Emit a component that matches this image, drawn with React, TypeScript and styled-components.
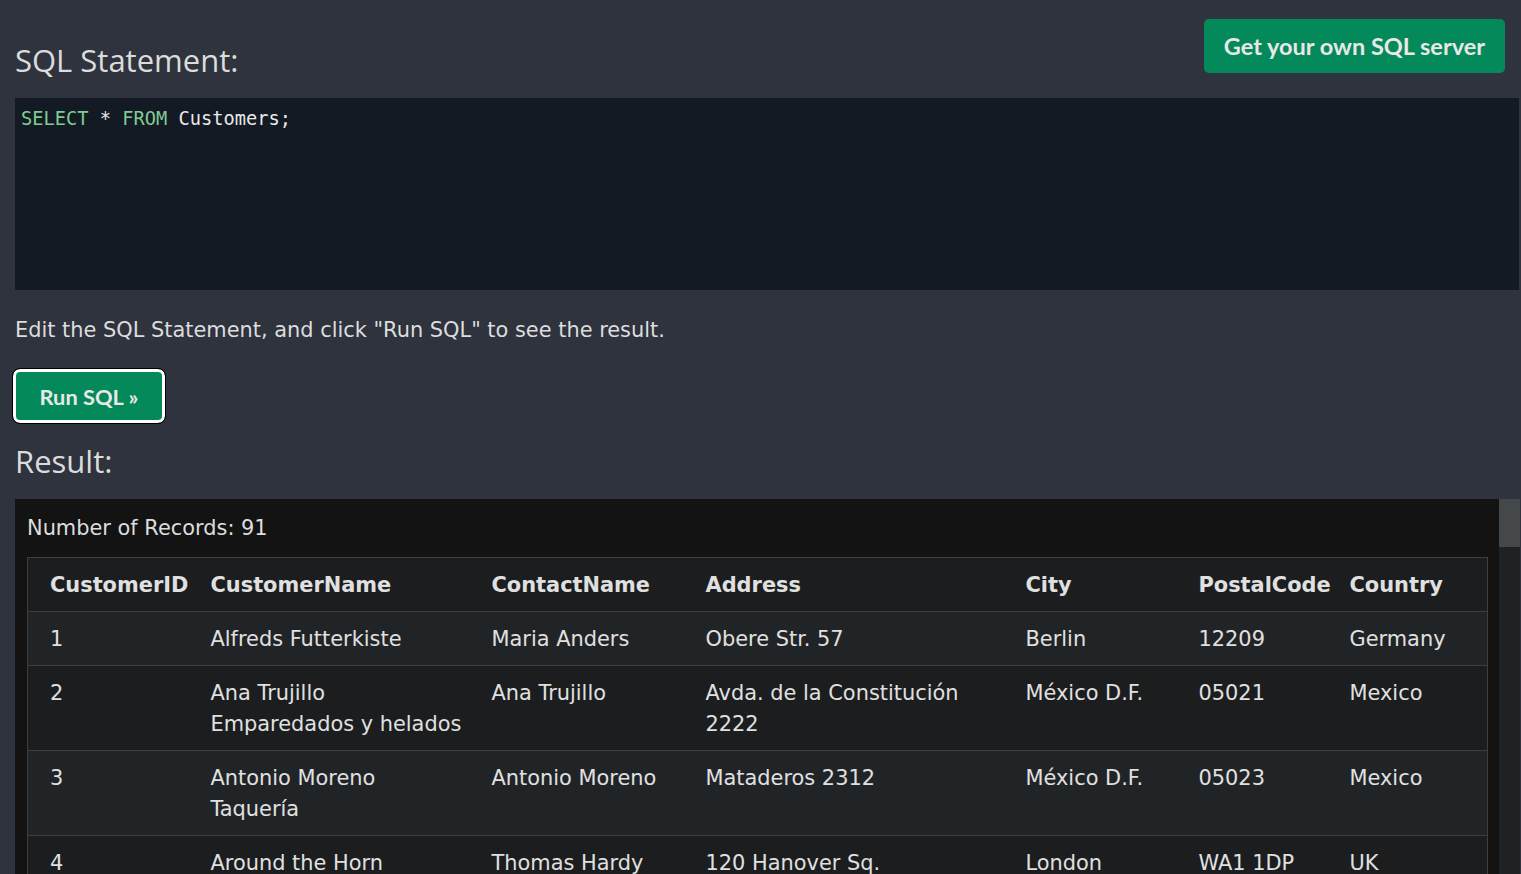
import React from "react";
import styled, { createGlobalStyle } from "styled-components";

const GlobalStyle = createGlobalStyle`
  html, body {
    margin: 0;
    padding: 0;
    background: #2e333d;
    overflow: hidden;
  }
  body {
    font-family: "DejaVu Sans", Verdana, sans-serif;
    color: #dddddd;
  }
`;

const Page = styled.div`
  padding: 0 1px 0 15px;
  height: 874px;
  box-sizing: border-box;
`;

const TopRow = styled.div`
  display: flex;
  justify-content: space-between;
  align-items: flex-start;
  padding-top: 19px;
`;

const Heading = styled.h2`
  margin: 22px 0 0 0;
  font-family: "Open Sans", "Noto Sans", sans-serif;
  font-weight: 400;
  font-size: 31px;
  line-height: 38px;
  color: #dcdcdc;
`;

const ServerButton = styled.button`
  height: 54px;
  margin-right: 15px;
  padding: 0 20px;
  border: none;
  border-radius: 5px;
  background: #04895a;
  color: #e8e8e8;
  font-family: Lato, "Open Sans", sans-serif;
  font-weight: 700;
  font-size: 23.5px;
  cursor: pointer;
`;

const CodeArea = styled.pre`
  margin: 19px 1px 0 0;
  height: 192px;
  box-sizing: border-box;
  padding: 9px 6px;
  background: #131a23;
  font-family: "DejaVu Sans Mono", "Liberation Mono", monospace;
  font-size: 18.7px;
  line-height: 24px;
  color: #e8e8e8;
`;

const Keyword = styled.span`
  color: #7fcb93;
`;

const Hint = styled.p`
  margin: 25px 0 0 0;
  font-size: 20.9px;
  line-height: 31px;
`;

const RunButton = styled.button`
  display: block;
  margin: 23px 0 0 -2px;
  width: 152px;
  height: 54px;
  box-sizing: border-box;
  border: 3px solid #ffffff;
  outline: 1px solid #000000;
  border-radius: 7px;
  background: #04895a;
  color: #e8e8e8;
  font-family: Lato, "Open Sans", sans-serif;
  font-weight: 700;
  font-size: 21.8px;
  cursor: pointer;
`;

const ResultHeading = styled(Heading)`
  margin-top: 19px;
`;

const ResultBox = styled.div`
  margin-top: 19px;
  height: 400px;
  display: flex;
  background: #131313;
`;

const ResultContent = styled.div`
  flex: 1;
  min-width: 0;
  overflow: hidden;
  padding: 14px 12px 0 12px;
`;

const ScrollTrack = styled.div`
  width: 21px;
  flex-shrink: 0;
  background: #1f2224;
`;

const ScrollThumb = styled.div`
  height: 48px;
  background: #45484a;
`;

const Count = styled.div`
  font-size: 20.9px;
  line-height: 31px;
  margin-bottom: 13px;
`;

const Table = styled.table`
  width: 1460px;
  border-collapse: collapse;
  border: 1px solid #3c3f42;
  table-layout: fixed;
  font-size: 20.9px;
  line-height: 31px;
  color: #e0e0e0;
`;

const HeadRow = styled.tr`
  background: #1b1d1f;
  border-bottom: 1px solid #3c3f42;
`;

const Row = styled.tr<{ $odd: boolean }>`
  background: ${(p) => (p.$odd ? "#212427" : "#1b1d1f")};
  border-bottom: 1px solid #3c3f42;
`;

const Th = styled.th`
  text-align: left;
  font-weight: 700;
  padding: 12px 4px 10px 22px;
  vertical-align: top;
  white-space: nowrap;
`;

const Td = styled.td`
  padding: 12px 8px 10px 22px;
  vertical-align: top;
`;

const widths = [161, 281, 214, 320, 173, 151, 160];
const headers = [
  "CustomerID",
  "CustomerName",
  "ContactName",
  "Address",
  "City",
  "PostalCode",
  "Country",
];

const rows: string[][] = [
  ["1", "Alfreds Futterkiste", "Maria Anders", "Obere Str. 57", "Berlin", "12209", "Germany"],
  ["2", "Ana Trujillo Emparedados y helados", "Ana Trujillo", "Avda. de la Constitución 2222", "México D.F.", "05021", "Mexico"],
  ["3", "Antonio Moreno Taquería", "Antonio Moreno", "Mataderos 2312", "México D.F.", "05023", "Mexico"],
  ["4", "Around the Horn", "Thomas Hardy", "120 Hanover Sq.", "London", "WA1 1DP", "UK"],
  ["5", "Berglunds snabbköp", "Christina Berglund", "Berguvsvägen 8", "Luleå", "S-958 22", "Sweden"],
  ["6", "Blauer See Delikatessen", "Hanna Moos", "Forsterstr. 57", "Mannheim", "68306", "Germany"],
];

export default function App() {
  return (
    <>
      <GlobalStyle />
      <Page>
        <TopRow>
          <Heading>SQL Statement:</Heading>
          <ServerButton>Get your own SQL server</ServerButton>
        </TopRow>
        <CodeArea>
          <Keyword>SELECT</Keyword> * <Keyword>FROM</Keyword> Customers;
        </CodeArea>
        <Hint>Edit the SQL Statement, and click "Run SQL" to see the result.</Hint>
        <RunButton>Run SQL »</RunButton>
        <ResultHeading>Result:</ResultHeading>
        <ResultBox>
          <ResultContent>
            <Count>Number of Records: 91</Count>
            <Table>
              <colgroup>
                {widths.map((w, i) => (
                  <col key={i} style={{ width: w }} />
                ))}
              </colgroup>
              <thead>
                <HeadRow>
                  {headers.map((h) => (
                    <Th key={h}>{h}</Th>
                  ))}
                </HeadRow>
              </thead>
              <tbody>
                {rows.map((r, i) => (
                  <Row key={r[0]} $odd={i % 2 === 0}>
                    {r.map((c, j) => (
                      <Td key={j}>{c}</Td>
                    ))}
                  </Row>
                ))}
              </tbody>
            </Table>
          </ResultContent>
          <ScrollTrack>
            <ScrollThumb />
          </ScrollTrack>
        </ResultBox>
      </Page>
    </>
  );
}
